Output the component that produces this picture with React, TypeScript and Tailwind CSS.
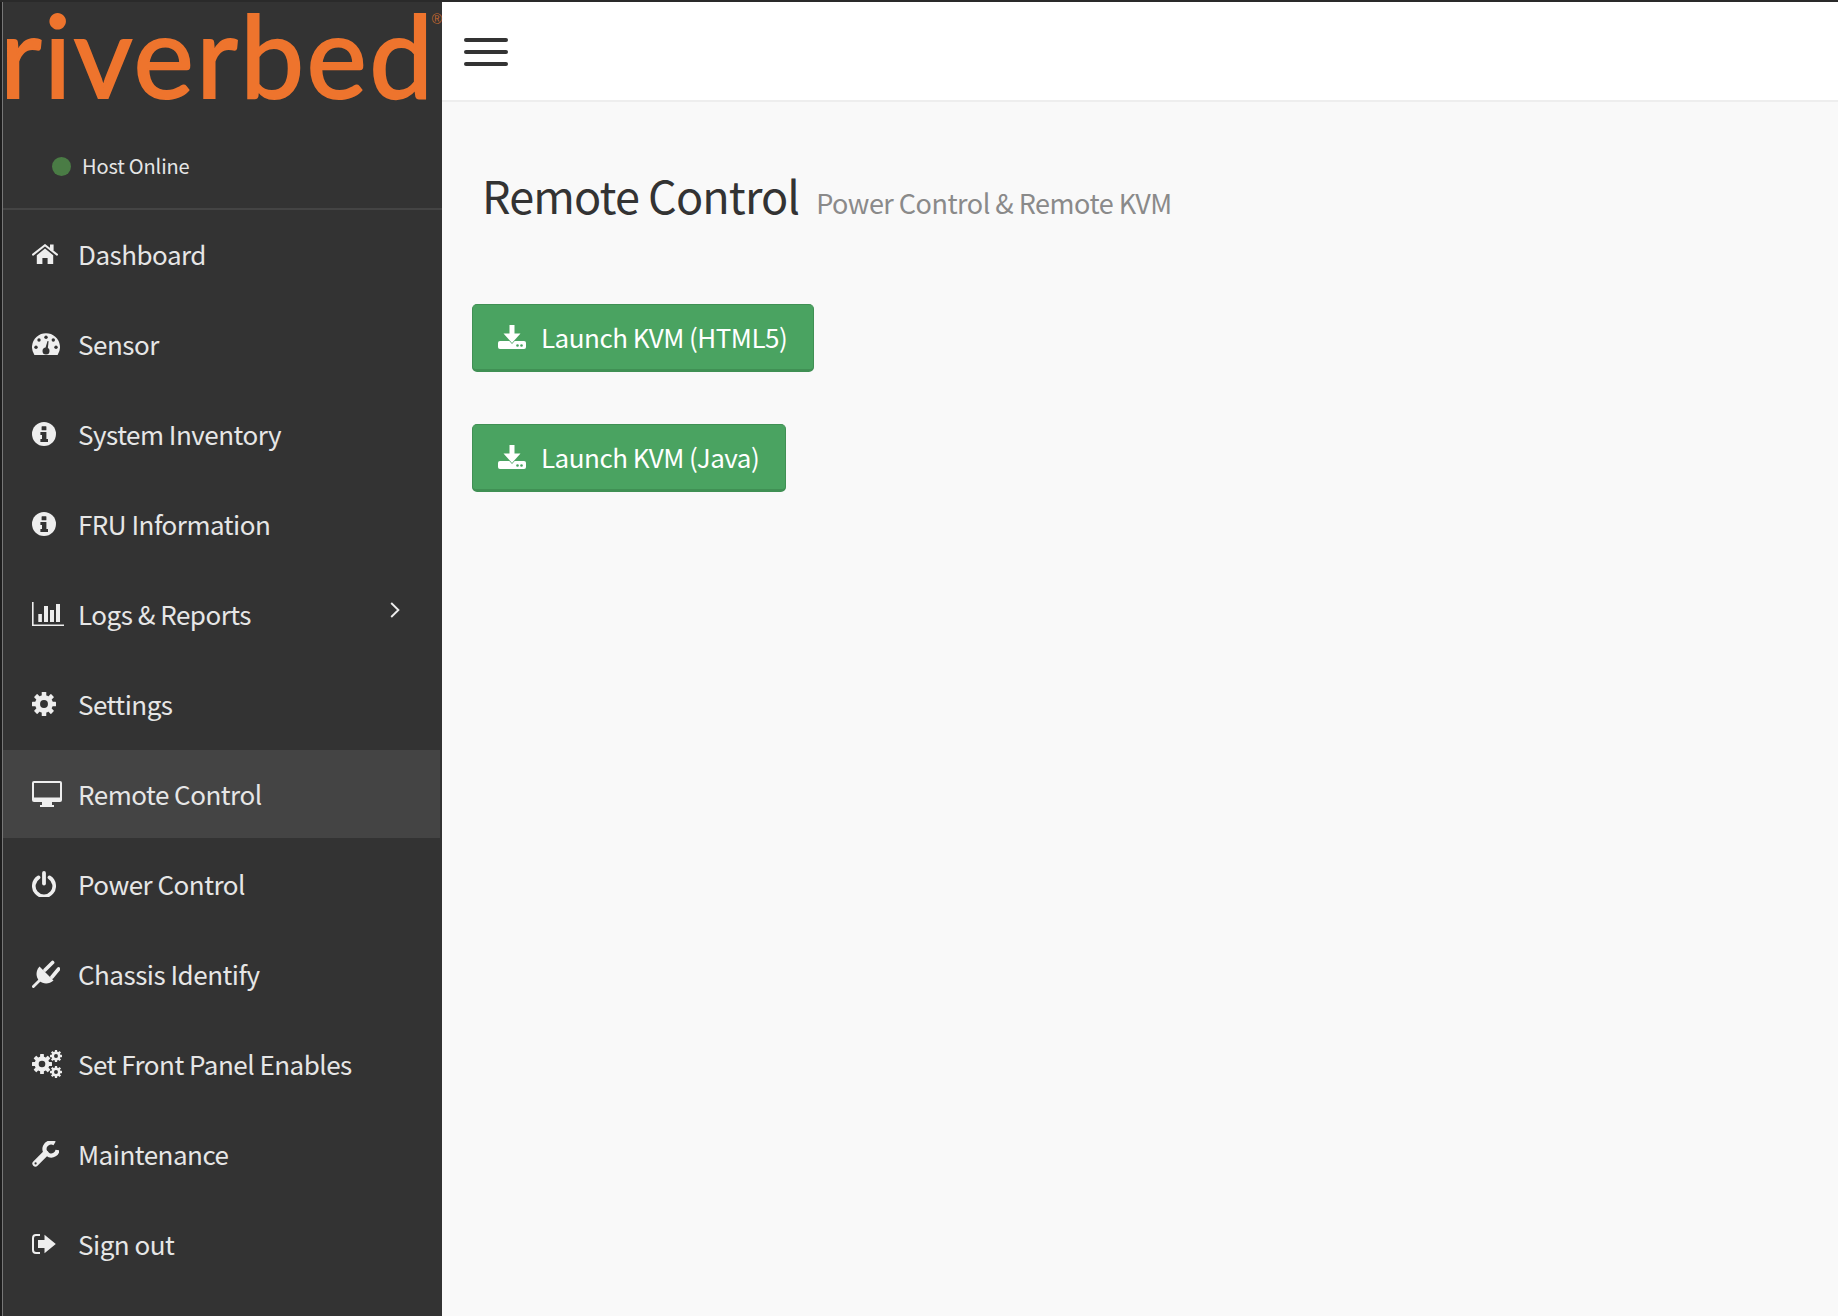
import React from "react";

const W = "#eeeeee";
const D = "#333333";

function GearShape({ cx, cy, r, fill = W, hole = D }: { cx: number; cy: number; r: number; fill?: string; hole?: string }) {
  const teeth = [0, 45, 90, 135, 180, 225, 270, 315];
  const t = r * 0.19;
  return (
    <g>
      {teeth.map((a) => (
        <rect key={a} x={cx - t} y={cy - r} width={t * 2} height={r * 0.5} rx={r * 0.05} fill={fill} transform={`rotate(${a} ${cx} ${cy})`} />
      ))}
      <circle cx={cx} cy={cy} r={r * 0.74} fill={fill} />
      <circle cx={cx} cy={cy} r={r * 0.33} fill={hole} />
    </g>
  );
}

const Home = () => (
  <svg width="26" height="20" viewBox="0 0 26 20">
    <rect x="18" y="0.5" width="3.6" height="6" fill={W} />
    <path d="M1 10.6 13 1.2 25 10.6" fill="none" stroke={W} strokeWidth="2" strokeLinecap="round" />
    <path d="M4.8 11.2 13 4.6 21.2 11.2V20H15.6V14H10.4V20H4.8Z" fill={W} />
  </svg>
);

const Gauge = () => (
  <svg width="28" height="22" viewBox="0 0 28 22">
    <path d="M2.4 22A14 14 0 1 1 25.6 22Z" fill={W} />
    {[[7, 7], [14, 4.3], [21.3, 7], [4, 14.3], [24, 14.3]].map(([x, y]) => (
      <circle key={x} cx={x} cy={y} r="1.7" fill={D} />
    ))}
    <path d="M13 16.5 15.5 8 16.6 8.3 15.6 17Z" fill={D} />
    <circle cx="14" cy="18" r="3.5" fill={D} />
  </svg>
);

const Info = () => (
  <svg width="24" height="24" viewBox="0 0 24 24">
    <circle cx="12" cy="12" r="12" fill={W} />
    <rect x="9.6" y="4.2" width="4.8" height="4" rx="0.5" fill={D} />
    <path d="M8.4 10H14.4V17H16V20H8.4V17H10V13H8.4Z" fill={D} />
  </svg>
);

const Chart = () => (
  <svg width="32" height="24" viewBox="0 0 32 24">
    <path d="M0 0H1.6V22.4H32V24H0Z" fill={W} />
    <rect x="6.3" y="12" width="3.6" height="8" fill={W} />
    <rect x="12" y="4" width="4" height="16" fill={W} />
    <rect x="18" y="8" width="4" height="12" fill={W} />
    <rect x="24" y="2" width="4" height="18" fill={W} />
  </svg>
);

const Cog = () => (
  <svg width="24" height="24" viewBox="0 0 24 24">
    <GearShape cx={12} cy={12} r={12} />
  </svg>
);

const Desktop = () => (
  <svg width="30" height="26" viewBox="0 0 30 26">
    <rect x="0" y="0" width="30" height="21" rx="2" fill={W} />
    <rect x="2" y="2" width="26" height="14.5" fill="#444444" />
    <path d="M10 21H20V24H22V26H8V24H10Z" fill={W} />
  </svg>
);

const Power = () => (
  <svg width="24" height="26" viewBox="0 0 24 26">
    <path d="M6.6 6.4A10.2 10.2 0 1 0 17.4 6.4" fill="none" stroke={W} strokeWidth="3.6" strokeLinecap="round" />
    <path d="M12 2V12.5" stroke={W} strokeWidth="3.8" strokeLinecap="round" />
  </svg>
);

const Plug = () => (
  <svg width="28" height="28" viewBox="0 0 28 28">
    <path d="M1.4 26.6 8 20" stroke={W} strokeWidth="2.8" strokeLinecap="round" />
    <path d="M13 10 20.6 2.4M20 17 26.6 9" stroke={W} strokeWidth="3.6" strokeLinecap="round" />
    <path d="M7.5 6.5 21.5 20.5C17 24.5 11 24 7.5 21 3.5 17 3.5 11 7.5 6.5Z" fill={W} />
  </svg>
);

const Cogs = () => (
  <svg width="30" height="28" viewBox="0 0 30 28">
    <GearShape cx={10} cy={14} r={10} />
    <GearShape cx={24} cy={6} r={6} />
    <GearShape cx={24} cy={22} r={6} />
  </svg>
);

const Wrench = () => (
  <svg width="27" height="26" viewBox="0 0 27 26">
    <path d="M3.4 22.6 13.6 12.4" stroke={W} strokeWidth="6" strokeLinecap="round" />
    <path d="M22.6 2.4A6.6 6.6 0 1 0 25.6 9" fill="none" stroke={W} strokeWidth="4.2" />
    <circle cx="3.6" cy="22.4" r="1.1" fill={D} />
  </svg>
);

const SignOut = () => (
  <svg width="24" height="20" viewBox="0 0 24 20">
    <path d="M8 1H4Q1 1 1 4V16Q1 19 4 19H8" fill="none" stroke={W} strokeWidth="2" />
    <path d="M6 6H12.5V0.8L23.8 10 12.5 19.2V14H6Z" fill={W} />
  </svg>
);

const Chevron = () => (
  <svg width="10" height="16" viewBox="0 0 10 16">
    <path d="M1.2 1 8.4 8 1.2 15" fill="none" stroke={W} strokeWidth="1.9" />
  </svg>
);

const Download = () => (
  <svg width="28" height="24" viewBox="0 0 28 24">
    <path d="M2 16H26Q28 16 28 18V22Q28 24 26 24H2Q0 24 0 22V18Q0 16 2 16Z" fill="#ffffff" />
    <path d="M11.5 0H16.5V8.5H22.5L14 18 5.5 8.5H11.5Z" fill="#ffffff" stroke="#4aa361" strokeWidth="1.4" paintOrder="stroke" />
    <circle cx="19.5" cy="20.5" r="1.3" fill="#4aa361" />
    <circle cx="23.5" cy="20.5" r="1.3" fill="#4aa361" />
  </svg>
);

const items: { label: string; icon: React.ReactNode; active?: boolean; chevron?: boolean }[] = [
  { label: "Dashboard", icon: <Home /> },
  { label: "Sensor", icon: <Gauge /> },
  { label: "System Inventory", icon: <Info /> },
  { label: "FRU Information", icon: <Info /> },
  { label: "Logs & Reports", icon: <Chart />, chevron: true },
  { label: "Settings", icon: <Cog /> },
  { label: "Remote Control", icon: <Desktop />, active: true },
  { label: "Power Control", icon: <Power /> },
  { label: "Chassis Identify", icon: <Plug /> },
  { label: "Set Front Panel Enables", icon: <Cogs /> },
  { label: "Maintenance", icon: <Wrench /> },
  { label: "Sign out", icon: <SignOut /> },
];

const SANS = "font-['Noto_Sans_CJK_JP','Noto_Sans',sans-serif]";

function KvmButton({ label }: { label: string }) {
  return (
    <button className="flex h-[68px] items-center rounded-[5px] border-[1.5px] border-b-[3px] border-[#409054] bg-[#4aa361] pl-[25px] pr-[26px] text-[26px] leading-none tracking-[-0.5px] text-white">
      <span className="mr-[15px] flex">
        <Download />
      </span>
      <span>{label}</span>
    </button>
  );
}

export default function App() {
  return (
    <div className={`flex h-[1316px] w-[1838px] flex-col overflow-hidden bg-[#222222] ${SANS}`}>
      <div className="h-[2px] shrink-0 bg-[#2a2a2a]" />
      <div className="flex min-h-0 flex-1">
        <div className="flex shrink-0">
          <div className="w-[2px] bg-[#1d1d1d]" />
          <div className="w-[1px] bg-[#777777]" />
        </div>
        <aside className="flex w-[439px] shrink-0 flex-col bg-[#333333]">
          <div className="relative h-[118px]">
            <div className="-ml-[3px] whitespace-nowrap font-['Lato',sans-serif] text-[114px] leading-[104px] tracking-[2.5px] text-[#ee742d] [-webkit-text-stroke:2px_#ee742d]">
              riverbed
            </div>
            <span className="absolute right-[0px] top-[10px] font-['Liberation_Sans',sans-serif] text-[14px] leading-none text-[#c4672f]">®</span>
          </div>
          <div className="flex h-[88px] items-center pl-[49px] pt-[4px]">
            <span className="h-[19px] w-[19px] rounded-full bg-[#4a7c45]" />
            <span className="ml-[11px] text-[20px] leading-none tracking-[-0.15px] text-[#e6e6e6]">Host Online</span>
          </div>
          <div className="h-[2px] bg-[#444444]" />
          <nav className="flex flex-col">
            {items.map((it) => (
              <a
                key={it.label}
                className={`mb-[2px] mr-[2px] flex h-[88px] items-center pl-[29px] text-[26px] leading-none tracking-[-0.5px] text-[#e6e6e6] ${it.active ? "bg-[#444444]" : ""}`}
              >
                <span className="flex w-[46px] shrink-0 items-center">{it.icon}</span>
                <span className="pb-[1px]">{it.label}</span>
                {it.chevron && (
                  <span className="ml-auto mr-[40px] flex -translate-y-[4px]">
                    <Chevron />
                  </span>
                )}
              </a>
            ))}
          </nav>
        </aside>
        <main className="flex min-w-0 flex-1 flex-col bg-[#f9f9f9]">
          <header className="flex h-[100px] shrink-0 items-center border-b-[2px] border-[#eeeeee] bg-white pl-[22px] pt-[2px]">
            <div className="flex flex-col gap-[8px]">
              <span className="h-[4px] w-[44px] rounded-full bg-[#333333]" />
              <span className="h-[4px] w-[44px] rounded-full bg-[#333333]" />
              <span className="h-[4px] w-[44px] rounded-full bg-[#333333]" />
            </div>
          </header>
          <div className="flex flex-col items-start pl-[30px]">
            <div className="mt-[63px] flex items-baseline pl-[10px]">
              <h1 className="text-[45px] font-normal leading-[60px] tracking-[-0.9px] text-[#333333]">Remote Control</h1>
              <span className="ml-[17px] text-[27px] leading-[60px] tracking-[-0.5px] text-[#8a8a8a]">Power Control &amp; Remote KVM</span>
            </div>
            <div className="mt-[71px] flex flex-col items-start gap-[52px]">
              <KvmButton label="Launch KVM (HTML5)" />
              <KvmButton label="Launch KVM (Java)" />
            </div>
          </div>
        </main>
      </div>
    </div>
  );
}
